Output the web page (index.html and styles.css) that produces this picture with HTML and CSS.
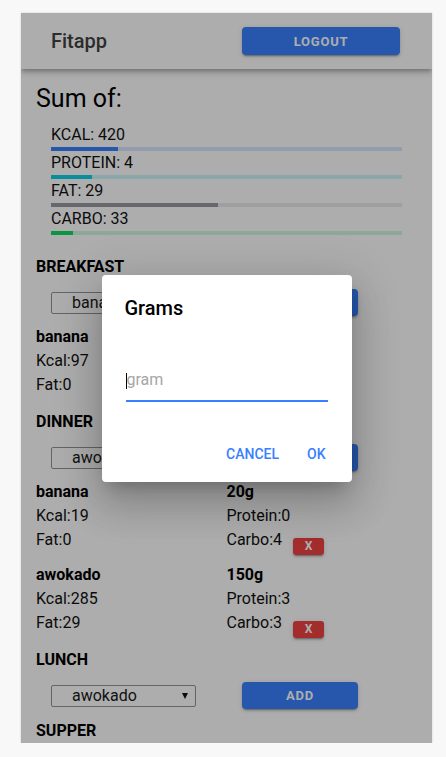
FILE: index.html
```html
<!DOCTYPE html>
<html lang="en">
<head>
<meta charset="utf-8">
<title>Fitapp</title>
<link rel="stylesheet" href="styles.css">
</head>
<body>
<div class="app">
  <header class="toolbar">
    <div class="tb-col"><span class="title">Fitapp</span></div>
    <div class="tb-col"><button class="btn btn-logout">LOGOUT</button></div>
  </header>
  <main class="content">
    <h1 class="sum-title">Sum of:</h1>
    <ul class="stats">
      <li class="stat">
        <div class="stat-label">KCAL: 420</div>
        <div class="bar bar-primary"><div class="bar-fill" style="width:19%"></div></div>
      </li>
      <li class="stat">
        <div class="stat-label">PROTEIN: 4</div>
        <div class="bar bar-secondary"><div class="bar-fill" style="width:11.7%"></div></div>
      </li>
      <li class="stat">
        <div class="stat-label">FAT: 29</div>
        <div class="bar bar-medium"><div class="bar-fill" style="width:47.6%"></div></div>
      </li>
      <li class="stat">
        <div class="stat-label">CARBO: 33</div>
        <div class="bar bar-success"><div class="bar-fill" style="width:6.3%"></div></div>
      </li>
    </ul>

    <section class="meal meal-first">
      <h2 class="meal-title">BREAKFAST</h2>
      <div class="meal-row">
        <div class="meal-col"><div class="select"><span class="select-text">banana</span><span class="select-arrow"></span></div></div>
        <div class="meal-col"><button class="btn btn-add">ADD</button></div>
      </div>
      <div class="item">
        <div class="item-col">
          <div class="item-line item-name">banana</div>
          <div class="item-line">Kcal:97</div>
          <div class="item-line item-last">Fat:0</div>
        </div>
        <div class="item-col">
          <div class="item-line item-name">100g</div>
          <div class="item-line">Protein:1</div>
          <div class="item-line item-last">Carbo:22<button class="btn-x">X</button></div>
        </div>
      </div>
    </section>

    <section class="meal">
      <h2 class="meal-title">DINNER</h2>
      <div class="meal-row">
        <div class="meal-col"><div class="select"><span class="select-text">awokado</span><span class="select-arrow"></span></div></div>
        <div class="meal-col"><button class="btn btn-add">ADD</button></div>
      </div>
      <div class="item">
        <div class="item-col">
          <div class="item-line item-name">banana</div>
          <div class="item-line">Kcal:19</div>
          <div class="item-line item-last">Fat:0</div>
        </div>
        <div class="item-col">
          <div class="item-line item-name">20g</div>
          <div class="item-line">Protein:0</div>
          <div class="item-line item-last">Carbo:4<button class="btn-x">X</button></div>
        </div>
      </div>
      <div class="item">
        <div class="item-col">
          <div class="item-line item-name">awokado</div>
          <div class="item-line">Kcal:285</div>
          <div class="item-line item-last">Fat:29</div>
        </div>
        <div class="item-col">
          <div class="item-line item-name">150g</div>
          <div class="item-line">Protein:3</div>
          <div class="item-line item-last">Carbo:3<button class="btn-x">X</button></div>
        </div>
      </div>
    </section>

    <section class="meal">
      <h2 class="meal-title">LUNCH</h2>
      <div class="meal-row">
        <div class="meal-col"><div class="select"><span class="select-text">awokado</span><span class="select-arrow"></span></div></div>
        <div class="meal-col"><button class="btn btn-add">ADD</button></div>
      </div>
    </section>

    <section class="meal">
      <h2 class="meal-title">SUPPER</h2>
    </section>
  </main>

  <div class="backdrop"></div>
  <div class="dialog-wrap">
    <div class="dialog">
      <h2 class="dialog-title">Grams</h2>
      <div class="dialog-input-wrap">
        <div class="dialog-input"><span class="caret"></span><span class="placeholder">gram</span></div>
      </div>
      <div class="dialog-buttons">
        <button class="dialog-btn">CANCEL</button>
        <button class="dialog-btn">OK</button>
      </div>
    </div>
  </div>
</div>
</body>
</html>
```

FILE: styles.css
```css
* { box-sizing: border-box; }

body {
  margin: 0;
  background: #f8f8f8;
  font-family: Roboto, "Noto Sans", "Liberation Sans", sans-serif;
  color: #000;
}

.app {
  position: relative;
  width: 411px;
  height: 730px;
  margin: 13px 0 0 21px;
  background: #fff;
  overflow: hidden;
  display: flex;
  flex-direction: column;
  box-shadow: 0 0 2px rgba(0, 0, 0, 0.18);
}

/* Toolbar */
.toolbar {
  flex: 0 0 56px;
  height: 56px;
  display: grid;
  grid-template-columns: 1fr 1fr;
  align-items: center;
  padding: 0 15px;
  background: #fff;
  position: relative;
  z-index: 2;
  box-shadow: 0 2px 4px -1px rgba(0, 0, 0, 0.2), 0 4px 5px 0 rgba(0, 0, 0, 0.14), 0 1px 10px 0 rgba(0, 0, 0, 0.12);
}

.tb-col { display: flex; align-items: center; }

.title {
  padding-left: 15px;
  font-size: 20px;
  font-weight: 500;
  color: #424242;
  line-height: 24px;
}

.btn {
  border: none;
  border-radius: 4px;
  background: #3880ff;
  color: #fff;
  font-family: Roboto, "Noto Sans", sans-serif;
  font-size: 13px;
  font-weight: 700;
  letter-spacing: 0.06em;
  padding: 0;
  box-shadow: 0 3px 1px -2px rgba(0, 0, 0, 0.2), 0 2px 2px 0 rgba(0, 0, 0, 0.14), 0 1px 5px 0 rgba(0, 0, 0, 0.12);
}

.btn-logout {
  width: 158px;
  height: 28px;
  margin-left: 15.5px;
}

/* Content */
.content {
  flex: 1 1 auto;
  padding: 0 15px;
  overflow: hidden;
}

.sum-title {
  margin: 14px 0 0;
  font-size: 25px;
  font-weight: 400;
  line-height: 31px;
}

.stats {
  list-style: none;
  margin: 11px 0 0;
  padding: 0 15px;
}

.stat-label {
  font-size: 16px;
  line-height: 19px;
  margin-bottom: 3px;
  color: #111;
}

.bar {
  height: 4px;
  margin-bottom: 2px;
  overflow: hidden;
}

.bar-fill { height: 100%; }

.bar-primary { background: rgba(56, 128, 255, 0.2); }
.bar-primary .bar-fill { background: #3880ff; }
.bar-secondary { background: rgba(12, 209, 232, 0.2); }
.bar-secondary .bar-fill { background: #0cd1e8; }
.bar-medium { background: rgba(152, 154, 162, 0.2); }
.bar-medium .bar-fill { background: #989aa2; }
.bar-success { background: rgba(16, 220, 96, 0.2); }
.bar-success .bar-fill { background: #10dc60; }

/* Meals */
.meal-title {
  margin: 12px 0 0;
  font-size: 16px;
  font-weight: 700;
  line-height: 19px;
}

.meal-first .meal-title { margin-top: 22px; }

.meal-row {
  margin-top: 13px;
  height: 27px;
  display: grid;
  grid-template-columns: 1fr 1fr;
  align-items: center;
}

.meal-col { display: flex; align-items: center; }

.select {
  margin-left: 15px;
  width: 145px;
  height: 22px;
  border: 1px solid #949494;
  border-radius: 2px;
  display: flex;
  align-items: center;
  justify-content: space-between;
  padding: 0 7px 0 20px;
  font-size: 16px;
  color: #1a1a1a;
}

.select-text { line-height: 19px; }

.select-arrow {
  width: 0;
  height: 0;
  border-left: 3.5px solid transparent;
  border-right: 3.5px solid transparent;
  border-top: 6px solid #111;
}

.btn-add {
  width: 116px;
  height: 27px;
  margin-left: 15.5px;
}

.item {
  margin-top: 9px;
  display: grid;
  grid-template-columns: 1fr 1fr;
}

.item + .item { margin-top: 8px; }

.item-line {
  font-size: 16px;
  line-height: 24px;
  height: 24px;
  color: #111;
}

.item-name { font-weight: 700; color: #000; }

.item-last {
  height: 27px;
  display: flex;
  align-items: flex-start;
}

.btn-x {
  width: 31px;
  height: 17px;
  margin: 10px 0 0 11px;
  padding: 0;
  border: none;
  border-radius: 3px;
  background: #f04141;
  color: #fff;
  font-family: Roboto, "Noto Sans", sans-serif;
  font-size: 12px;
  font-weight: 700;
  line-height: 17px;
  box-shadow: 0 3px 1px -2px rgba(0, 0, 0, 0.2), 0 2px 2px 0 rgba(0, 0, 0, 0.14), 0 1px 5px 0 rgba(0, 0, 0, 0.12);
}

/* Modal */
.backdrop {
  position: absolute;
  inset: 0;
  background: rgba(0, 0, 0, 0.32);
  z-index: 10;
}

.dialog-wrap {
  position: absolute;
  inset: 0;
  display: flex;
  align-items: center;
  justify-content: center;
  z-index: 11;
}

.dialog {
  width: 250px;
  background: #fff;
  border-radius: 4px;
  box-shadow: 0 11px 15px -7px rgba(0, 0, 0, 0.2), 0 24px 38px 3px rgba(0, 0, 0, 0.14), 0 9px 46px 8px rgba(0, 0, 0, 0.12);
}

.dialog-title {
  margin: 0;
  padding: 22px 23px 13px;
  font-size: 20px;
  font-weight: 500;
  line-height: 23px;
  color: #000;
}

.dialog-input-wrap { padding: 28px 24px 0; }

.dialog-input {
  padding: 9px 0 11px;
  font-size: 16px;
  line-height: 19px;
  height: 41px;
  border-bottom: 2px solid #3880ff;
}

.caret {
  display: inline-block;
  width: 1px;
  height: 16px;
  background: #000;
  vertical-align: -4px;
}

.placeholder { color: #a6a6a6; }

.dialog-buttons {
  display: flex;
  justify-content: flex-end;
  padding: 34px 8px 10px 24px;
}

.dialog-btn {
  height: 36px;
  margin-right: 8px;
  padding: 0 10px;
  border: none;
  background: transparent;
  color: #3880ff;
  font-family: Roboto, "Noto Sans", sans-serif;
  font-size: 14px;
  font-weight: 500;
  line-height: 36px;
}
```
